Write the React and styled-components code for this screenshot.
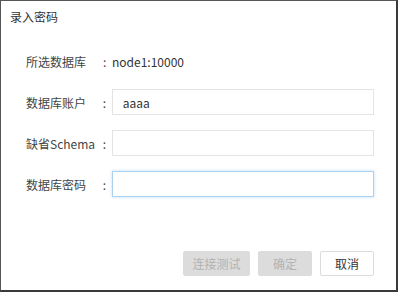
import React from 'react'
import styled, { createGlobalStyle } from 'styled-components';

const GlobalStyle = createGlobalStyle`
    body {
        margin: 0;
        background: #fff;
        font-family: "Noto Sans CJK SC", "Noto Sans", sans-serif;
    }
`;

const Dialog = styled.div`
    width: 398px;
    height: 292px;
    box-sizing: border-box;
    border: 1px solid #555;
    border-right: 2px solid #3a3a3a;
    border-bottom: 2px solid #3a3a3a;
    display: flex;
    flex-direction: column;
    background: #fff;
`;

const Title = styled.div`
    font-size: 12px;
    color: #333;
    padding: 7px 0 0 9px;
    height: 24px;
    box-sizing: border-box;
`;

const Body = styled.div`
    flex: 1;
    display: flex;
    flex-direction: column;
    gap: 15px;
    padding: 23px 22px 0 25px;
`;

const Row = styled.div`
    display: flex;
    align-items: center;
    height: 26px;
`;

const Label = styled.span`
    width: 77px;
    font-size: 12px;
    color: #444;
`;

const Colon = styled.span`
    width: 9px;
    font-size: 12px;
    color: #444;
`;

const Value = styled.span`
    font-size: 12px;
    color: #333;
`;

const Input = styled.input`
    width: 263px;
    height: 26px;
    box-sizing: border-box;
    border: 1px solid ${props => props.focused ? '#a9d1f2' : '#e4e4e4'};
    box-shadow: ${props => props.focused ? '0 0 3px rgba(110, 180, 240, 0.45)' : 'none'};
    padding: 0 10px;
    font-family: inherit;
    font-size: 12px;
    color: #333;
    outline: none;
`;

const Footer = styled.div`
    display: flex;
    justify-content: flex-end;
    gap: 8px;
    padding: 0 22px 14px 0;
`;

const Button = styled.button`
    width: ${props => props.width || '54px'};
    height: 25px;
    box-sizing: border-box;
    border-radius: 2px;
    border: 1px solid ${props => props.disabled ? '#dcdcdc' : '#dcdcdc'};
    background: ${props => props.disabled ? '#dcdcdc' : '#fff'};
    color: ${props => props.disabled ? '#b2b2b2' : '#333'};
    font-family: inherit;
    font-size: 12px;
    padding: 0;
`;

export default function App() {
    return (
        <>
            <GlobalStyle />
            <Dialog>
                <Title>录入密码</Title>
                <Body>
                    <Row>
                        <Label>所选数据库</Label>
                        <Colon>:</Colon>
                        <Value>node1:10000</Value>
                    </Row>
                    <Row>
                        <Label>数据库账户</Label>
                        <Colon>:</Colon>
                        <Input defaultValue="aaaa" />
                    </Row>
                    <Row>
                        <Label>缺省Schema</Label>
                        <Colon>:</Colon>
                        <Input />
                    </Row>
                    <Row>
                        <Label>数据库密码</Label>
                        <Colon>:</Colon>
                        <Input type="password" focused />
                    </Row>
                </Body>
                <Footer>
                    <Button disabled width="67px">连接测试</Button>
                    <Button disabled>确定</Button>
                    <Button>取消</Button>
                </Footer>
            </Dialog>
        </>
    )
}
